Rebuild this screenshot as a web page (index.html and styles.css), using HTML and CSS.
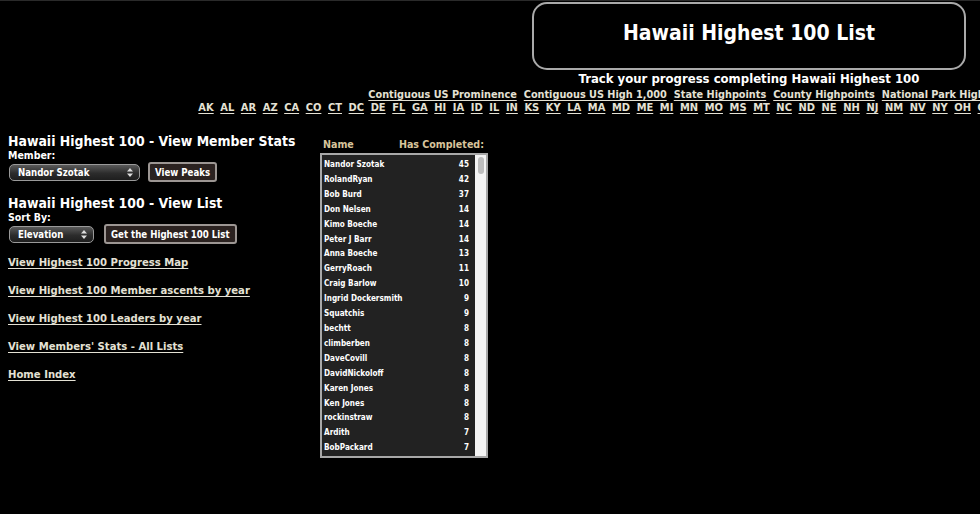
FILE: index.html
```html
<!DOCTYPE html>
<html lang="en">
<head>
<meta charset="utf-8">
<title>Hawaii Highest 100 List</title>
<link rel="stylesheet" href="styles.css">
</head>
<body>
<div class="topline"></div>
<header class="header">
  <div class="titlebox"><h1>Hawaii Highest 100 List</h1></div>
  <div class="subtitle">Track your progress completing Hawaii Highest 100</div>
  <nav class="navrow">
    <a href="#">Contiguous US Prominence</a>
    <a href="#">Contiguous US High 1,000</a>
    <a href="#">State Highpoints</a>
    <a href="#">County Highpoints</a>
    <a href="#">National Park Highpoints</a>
    <a href="#">Canada Highpoints</a>
  </nav>
  <nav class="navrow states">
    <a href="#">AK</a><a href="#">AL</a><a href="#">AR</a><a href="#">AZ</a><a href="#">CA</a><a href="#">CO</a><a href="#">CT</a><a href="#">DC</a><a href="#">DE</a><a href="#">FL</a><a href="#">GA</a><a href="#">HI</a><a href="#">IA</a><a href="#">ID</a><a href="#">IL</a><a href="#">IN</a><a href="#">KS</a><a href="#">KY</a><a href="#">LA</a><a href="#">MA</a><a href="#">MD</a><a href="#">ME</a><a href="#">MI</a><a href="#">MN</a><a href="#">MO</a><a href="#">MS</a><a href="#">MT</a><a href="#">NC</a><a href="#">ND</a><a href="#">NE</a><a href="#">NH</a><a href="#">NJ</a><a href="#">NM</a><a href="#">NV</a><a href="#">NY</a><a href="#">OH</a><a href="#">OK</a><a href="#">OR</a><a href="#">PA</a><a href="#">RI</a><a href="#">SC</a><a href="#">SD</a><a href="#">TN</a><a href="#">TX</a><a href="#">UT</a><a href="#">VA</a><a href="#">VT</a><a href="#">WA</a><a href="#">WI</a><a href="#">WV</a><a href="#">WY</a>
  </nav>
</header>

<main class="main">
  <section class="left">
    <h2 class="sec-title">Hawaii Highest 100 - View Member Stats</h2>
    <div class="label">Member:</div>
    <div class="formrow">
      <div class="select wide"><span>Nandor Szotak</span><svg class="arrows" width="6" height="9" viewBox="0 0 6 9"><path d="M3 0 L6 3.5 H0 Z M3 9 L6 5.5 H0 Z" fill="#ddd"/></svg></div>
      <button class="btn">View Peaks</button>
    </div>

    <h2 class="sec-title second">Hawaii Highest 100 - View List</h2>
    <div class="label">Sort By:</div>
    <div class="formrow">
      <div class="select narrow"><span>Elevation</span><svg class="arrows" width="6" height="9" viewBox="0 0 6 9"><path d="M3 0 L6 3.5 H0 Z M3 9 L6 5.5 H0 Z" fill="#ddd"/></svg></div>
      <button class="btn btn2">Get the Highest 100 List</button>
    </div>

    <ul class="links">
      <li><a href="#">View Highest 100 Progress Map</a></li>
      <li><a href="#">View Highest 100 Member ascents by year</a></li>
      <li><a href="#">View Highest 100 Leaders by year</a></li>
      <li><a href="#">View Members' Stats - All Lists</a></li>
      <li><a href="#">Home Index</a></li>
    </ul>
  </section>

  <section class="right">
    <div class="listhead"><span>Name</span><span>Has Completed:</span></div>
    <div class="listbox">
      <div class="rows">
        <div class="row"><span>Nandor Szotak</span><span>45</span></div>
        <div class="row"><span>RolandRyan</span><span>42</span></div>
        <div class="row"><span>Bob Burd</span><span>37</span></div>
        <div class="row"><span>Don Nelsen</span><span>14</span></div>
        <div class="row"><span>Kimo Boeche</span><span>14</span></div>
        <div class="row"><span>Peter J Barr</span><span>14</span></div>
        <div class="row"><span>Anna Boeche</span><span>13</span></div>
        <div class="row"><span>GerryRoach</span><span>11</span></div>
        <div class="row"><span>Craig Barlow</span><span>10</span></div>
        <div class="row"><span>Ingrid Dockersmith</span><span>9</span></div>
        <div class="row"><span>Squatchis</span><span>9</span></div>
        <div class="row"><span>bechtt</span><span>8</span></div>
        <div class="row"><span>climberben</span><span>8</span></div>
        <div class="row"><span>DaveCovill</span><span>8</span></div>
        <div class="row"><span>DavidNickoloff</span><span>8</span></div>
        <div class="row"><span>Karen Jones</span><span>8</span></div>
        <div class="row"><span>Ken Jones</span><span>8</span></div>
        <div class="row"><span>rockinstraw</span><span>8</span></div>
        <div class="row"><span>Ardith</span><span>7</span></div>
        <div class="row"><span>BobPackard</span><span>7</span></div>
      </div>
      <div class="scrolltrack"><div class="thumb"></div></div>
    </div>
  </section>
</main>
</body>
</html>
```

FILE: styles.css
```css
html, body {
  margin: 0;
  padding: 0;
  background: #000;
  overflow: hidden;
}
body {
  font-family: "DejaVu Sans Condensed", "DejaVu Sans", sans-serif;
  font-weight: bold;
  color: #fff;
  width: 980px;
  height: 514px;
}
.topline {
  height: 1px;
  background: #2a2a2a;
}
.header {
  width: 1482px;
  margin-left: 8px;
  display: flex;
  flex-direction: column;
  align-items: center;
  padding-top: 1px;
}
.titlebox {
  box-sizing: border-box;
  width: 434px;
  height: 68px;
  padding-bottom: 6px;
  border: 2px solid #a9a9a9;
  border-radius: 15px;
  display: flex;
  align-items: center;
  justify-content: center;
}
.titlebox h1 {
  margin: 0;
  font-size: 21px;
  font-weight: bold;
  color: #fff;
}
.subtitle {
  font-size: 13px;
  line-height: 16px;
  margin-top: 1px;
}
.navrow {
  display: flex;
  gap: 7px;
  font-size: 10.8px;
  line-height: 13px;
  white-space: nowrap;
  margin-top: 1px;
}
.navrow.states {
  font-size: 11px;
  gap: 6.6px;
  margin-top: 0;
}
a {
  color: #e4e1d4;
  text-decoration: underline;
  text-underline-offset: 2px;
}
.main {
  display: flex;
  padding: 19px 0 0 8px;
}
.left {
  width: 312px;
}
.sec-title {
  margin: 0;
  font-size: 13.9px;
  line-height: 16px;
  font-weight: bold;
  color: #fff;
}
.sec-title.second {
  margin-top: 13px;
}
.label {
  font-size: 10.5px;
  line-height: 13px;
}
.formrow {
  display: flex;
  align-items: center;
  gap: 8px;
  height: 20px;
}
.select {
  box-sizing: border-box;
  height: 17px;
  border: 1px solid #9a9a9a;
  border-radius: 5px;
  background: linear-gradient(#5a5a5a, #2c2c2c 55%, #1e1e1e);
  display: flex;
  align-items: center;
  justify-content: space-between;
  padding: 0 6px 0 8px;
  font-size: 9.6px;
  color: #fff;
  margin-left: 1px;
}
.select.wide { width: 131px; }
.select.narrow { width: 85px; }
.btn {
  box-sizing: border-box;
  height: 20px;
  padding: 0 5px;
  border: 2px solid #9c9693;
  border-radius: 3px;
  background: #2b2220;
  color: #fff;
  font-family: inherit;
  font-weight: bold;
  font-size: 9.6px;
}
.btn2 { margin-left: 2px; }
.links {
  list-style: none;
  margin: 11px 0 0;
  padding: 0;
  display: flex;
  flex-direction: column;
  gap: 13px;
  font-size: 11.2px;
  line-height: 15px;
}
.right {
  width: 170px;
  padding-top: 5px;
}
.listhead {
  display: flex;
  justify-content: space-between;
  font-size: 10.6px;
  line-height: 13px;
  color: #d8c49c;
  padding: 0 6px 0 3px;
}
.listbox {
  margin-top: 2px;
  box-sizing: border-box;
  width: 168px;
  height: 305px;
  border: 2px solid #a8a8a8;
  background: #222;
  display: flex;
}
.rows {
  flex: 1;
  padding: 2px 6px 0 2px;
}
.row {
  display: flex;
  justify-content: space-between;
  font-size: 8.1px;
  line-height: 14.9px;
  color: #fff;
}
.scrolltrack {
  width: 11px;
  background: #f4f4f4;
  padding: 2px 2px 0 2px;
  box-sizing: border-box;
}
.thumb {
  width: 6px;
  height: 17px;
  margin-left: 1px;
  border-radius: 3px;
  background: #bdbdbd;
}
```
